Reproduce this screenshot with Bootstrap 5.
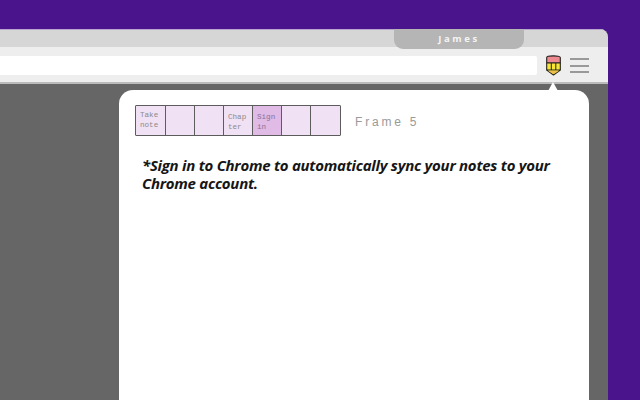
<!DOCTYPE html>
<html lang="en">
<head>
<meta charset="utf-8">
<title>Notes popup</title>
<link rel="stylesheet" href="https://cdn.jsdelivr.net/npm/bootstrap@5.3.0/dist/css/bootstrap.min.css">
<style>
html,body{height:400px;overflow:hidden}
body{background:#4a148c;padding-top:29px}
.bwin{width:608px;height:371px;border-top-right-radius:8px;overflow:hidden;background:#666}
.tabstrip{height:18px;background:#d6d6d6;padding-right:84px;box-shadow:inset 0 1px 0 #b9a6cf}
.usertab{width:130px;height:20px;background:#b5b5b5;border-radius:0 0 9px 9px;color:#f4f4f4;font:700 9.500px/20px "Open Sans",sans-serif;letter-spacing:2.600px;text-align:center;position:relative;z-index:1}
.toolbar{height:37px;background:#eee;border-bottom:2px solid #bbb;padding:2px 18px 0 0}
.addr{width:537px;height:19px;background:#fff;border-radius:0 2px 2px 0;margin-right:9px}
.pencil{display:block;margin-right:9px}
.burger{width:19px;gap:4.300px}
.burger span{height:2px;background:#999}
.pane{padding:6px 0 0 119px}
.notepop{width:470px;height:330px;background:#fff;border-radius:14px 14px 0 0;position:relative;padding:15px 16px 0}
.notepop::before{content:"";position:absolute;left:429px;top:-8px;border:solid transparent;border-width:0 5px 9px;border-bottom-color:#fff}
.framebar{width:206px;height:31px;border:1px solid #5c5c5c;border-radius:1px}
.cell{width:29px;background:#f1e1f5;border-right:1px solid #5c5c5c;padding:4px 3px 0 4px;font:7.600px/10px "Liberation Mono",monospace;color:#8a8a8a;flex:none;opacity:.99}
.cell:first-child{width:30px}
.cell:last-child{border-right:0;flex:1;width:auto}
.cell.lift{padding-top:6px}
.cell.now{background:#dfbbe6;color:#8d6f96}
.framename{margin-left:14px;padding-top:2px;font:12px/1 "Liberation Sans",sans-serif;letter-spacing:2.800px;color:#999;opacity:.99}
.syncmsg{margin:20px 0 0 7px;width:440px;font:italic 700 15px/18px "Open Sans",sans-serif;color:#161616;letter-spacing:-.27px}
</style>
</head>
<body>
<div class="bwin d-flex flex-column">
  <div class="tabstrip d-flex justify-content-end flex-shrink-0"><div class="usertab">James</div></div>
  <div class="toolbar d-flex align-items-center flex-shrink-0">
    <div class="addr flex-shrink-0"></div>
    <svg class="pencil flex-shrink-0" width="15" height="21" viewBox="0 0 15 21" aria-hidden="true">
      <path d="M.7 2.500C.7 .300 14.300 .300 14.300 2.500V8H.7Z" fill="#ec8a8f" stroke="#222" stroke-width="1.100"/>
      <path d="M.7 8H14.300V15L7.500 20 .7 15Z" fill="#f7e635" stroke="#222" stroke-width="1.100" stroke-linejoin="round"/>
      <path d="M5.300 8V15M9.800 8V15M.7 15H14.300" stroke="#222" stroke-width="1"/>
      <path d="M1.800 15.700H13.200L7.500 19.300Z" fill="#eec04a"/>
    </svg>
    <div class="burger d-flex flex-column flex-shrink-0"><span></span><span></span><span></span></div>
  </div>
  <div class="pane flex-grow-1">
    <div class="notepop">
      <div class="d-flex align-items-center">
        <div class="framebar d-flex flex-shrink-0">
          <div class="cell">Take note</div>
          <div class="cell"></div>
          <div class="cell"></div>
          <div class="cell lift">Chap ter</div>
          <div class="cell lift now">Sign in</div>
          <div class="cell"></div>
          <div class="cell"></div>
        </div>
        <div class="framename">Frame 5</div>
      </div>
      <p class="syncmsg">*Sign in to Chrome to automatically sync your notes to your Chrome account.</p>
    </div>
  </div>
</div>
<script src="https://cdn.jsdelivr.net/npm/bootstrap@5.3.0/dist/js/bootstrap.bundle.min.js"></script>
</body>
</html>
